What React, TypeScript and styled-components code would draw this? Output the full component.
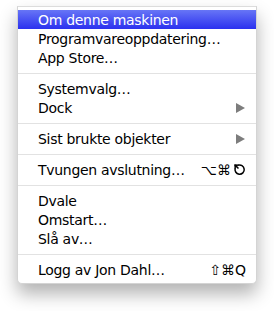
import * as React from "react";
import styled, { createGlobalStyle } from "styled-components";

const Global = createGlobalStyle`
    html, body {
        margin: 0;
        padding: 0;
        background: #ffffff;
    }
`;

const Page = styled.div`
    padding: 6px 0 0 17px;
    width: 274px;
    height: 311px;
    box-sizing: border-box;
    font-family: "DejaVu Sans", "Noto Sans", sans-serif;
`;

const Menu = styled.div`
    width: 240px;
    box-sizing: border-box;
    padding: 3px 0 4px;
    background: #ffffff;
    border: 1px solid #d4d4d4;
    border-top-color: #dcdcdc;
    border-radius: 0 0 5px 5px;
    box-shadow: 0 10px 18px rgba(0, 0, 0, 0.3);
`;

const Item = styled.div<{ $active?: boolean }>`
    display: flex;
    align-items: center;
    height: 19px;
    padding: 0 10px 0 20px;
    font-size: 14px;
    letter-spacing: -0.3px;
    color: ${(p) => (p.$active ? "#ffffff" : "#000000")};
    background: ${(p) =>
        p.$active ? "linear-gradient(#6775f6, #2b31ef)" : "transparent"};
`;

const Label = styled.span`
    flex: 1;
    white-space: nowrap;
`;

const Keys = styled.span`
    display: flex;
    align-items: center;
    gap: 2px;
    font-size: 14px;
    letter-spacing: 0;
    color: #000000;
`;

const Arrow = styled.span`
    width: 0;
    height: 0;
    margin-right: 1px;
    border-top: 5px solid transparent;
    border-bottom: 5px solid transparent;
    border-left: 9px solid #7d7d7d;
`;

const Separator = styled.div`
    height: 12px;
    display: flex;
    align-items: center;

    &::after {
        content: "";
        flex: 1;
        height: 1px;
        background: #e2e2e2;
    }
`;

const ForceQuitGlyph = () => (
    <svg width="13" height="13" viewBox="0 0 13 13">
        <path
            d="M5 2.3 A4.6 4.6 0 1 1 2.3 5"
            fill="none"
            stroke="#000"
            strokeWidth="1.5"
        />
        <path d="M1.2 1.2 L6 1.6 L1.6 6 Z" fill="#000" />
        <path d="M2 2 L5.5 5.5" stroke="#000" strokeWidth="1.5" />
    </svg>
);

export default function App() {
    return (
        <Page>
            <Global />
            <Menu>
                <Item $active>
                    <Label>Om denne maskinen</Label>
                </Item>
                <Item>
                    <Label>Programvareoppdatering…</Label>
                </Item>
                <Item>
                    <Label>App Store…</Label>
                </Item>
                <Separator />
                <Item>
                    <Label>Systemvalg…</Label>
                </Item>
                <Item>
                    <Label>Dock</Label>
                    <Arrow />
                </Item>
                <Separator />
                <Item>
                    <Label>Sist brukte objekter</Label>
                    <Arrow />
                </Item>
                <Separator />
                <Item>
                    <Label>Tvungen avslutning…</Label>
                    <Keys>
                        ⌥⌘
                        <ForceQuitGlyph />
                    </Keys>
                </Item>
                <Separator />
                <Item>
                    <Label>Dvale</Label>
                </Item>
                <Item>
                    <Label>Omstart…</Label>
                </Item>
                <Item>
                    <Label>Slå av…</Label>
                </Item>
                <Separator />
                <Item>
                    <Label>Logg av Jon Dahl…</Label>
                    <Keys>⇧⌘Q</Keys>
                </Item>
            </Menu>
        </Page>
    );
}
